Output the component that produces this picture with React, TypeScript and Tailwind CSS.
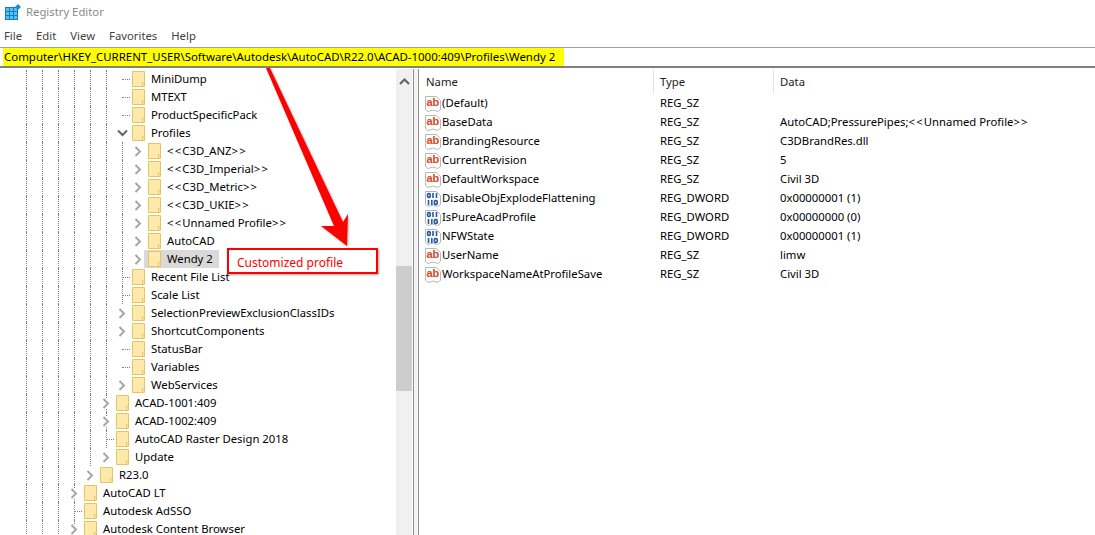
import React from "react";

const Folder = () => (
  <svg width="13" height="16" viewBox="0 0 13 16" className="shrink-0">
    <path d="M0.5 0.5H12.5V15.5H0.5Z" fill="#ffe9a8" stroke="#e6c567" />
    <path d="M10.5 11.5V15M11 11.5H12" stroke="#e6c567" fill="none" />
  </svg>
);

const ChevronRight = () => (
  <svg width="8" height="11" viewBox="0 0 8 11" className="relative bg-white">
    <path d="M1.5 1L6 5.5L1.5 10" fill="none" stroke="#a6a6a6" strokeWidth="2" />
  </svg>
);

const ChevronDown = () => (
  <svg width="11" height="8" viewBox="0 0 11 8" className="relative bg-white">
    <path d="M1 1.5L5.5 6L10 1.5" fill="none" stroke="#646464" strokeWidth="2" />
  </svg>
);

const Spaced = ({ text }: { text: string }) => (
  <>
    {text.split(/(<<|>>)/).map((part, i) =>
      part === "<<" || part === ">>" ? (
        <span key={i} className="tracking-[1.2px]">{part}</span>
      ) : (
        <span key={i}>{part}</span>
      )
    )}
  </>
);

type Chev = "right" | "down" | "none";
type Node = { depth: number; label: string; chev: Chev; line?: boolean; selected?: boolean };

const nodes: Node[] = [
  { depth: 8, label: "MiniDump", chev: "none" },
  { depth: 8, label: "MTEXT", chev: "none" },
  { depth: 8, label: "ProductSpecificPack", chev: "none" },
  { depth: 8, label: "Profiles", chev: "down" },
  { depth: 9, label: "<<C3D_ANZ>>", chev: "right" },
  { depth: 9, label: "<<C3D_Imperial>>", chev: "right" },
  { depth: 9, label: "<<C3D_Metric>>", chev: "right" },
  { depth: 9, label: "<<C3D_UKIE>>", chev: "right" },
  { depth: 9, label: "<<Unnamed Profile>>", chev: "right" },
  { depth: 9, label: "AutoCAD", chev: "right" },
  { depth: 9, label: "Wendy 2", chev: "right", selected: true },
  { depth: 8, label: "Recent File List", chev: "none", line: true },
  { depth: 8, label: "Scale List", chev: "none", line: true },
  { depth: 8, label: "SelectionPreviewExclusionClassIDs", chev: "right" },
  { depth: 8, label: "ShortcutComponents", chev: "right" },
  { depth: 8, label: "StatusBar", chev: "none" },
  { depth: 8, label: "Variables", chev: "none" },
  { depth: 8, label: "WebServices", chev: "right" },
  { depth: 7, label: "ACAD-1001:409", chev: "right", line: true },
  { depth: 7, label: "ACAD-1002:409", chev: "right", line: true },
  { depth: 7, label: "AutoCAD Raster Design 2018", chev: "none", line: true },
  { depth: 7, label: "Update", chev: "right" },
  { depth: 6, label: "R23.0", chev: "right" },
  { depth: 5, label: "AutoCAD LT", chev: "right", line: true },
  { depth: 5, label: "Autodesk AdSSO", chev: "none", line: true },
  { depth: 5, label: "Autodesk Content Browser", chev: "right", line: true },
];

const TreeRow = ({ n }: { n: Node }) => {
  const full = Array.from({ length: n.depth - 3 });
  return (
    <div className="flex h-[18px] shrink-0 items-center pl-[26px]">
      {full.map((_, i) => (
        <span key={i} className="h-full w-4 shrink-0 border-l border-dotted border-[#808080]" />
      ))}
      <span className="h-full w-2 shrink-0 border-l border-dotted border-[#808080]" />
      <span className="relative flex h-full w-4 shrink-0 items-center justify-center">
        {n.line && <span className="absolute top-0 left-2 h-full border-l border-dotted border-[#808080]" />}
        {n.chev === "right" && <ChevronRight />}
        {n.chev === "down" && <ChevronDown />}
        {n.chev === "none" && <span className="absolute top-[9px] left-2 w-2 border-t border-dotted border-[#808080]" />}
      </span>
      <div className={`flex h-full items-center ${n.selected ? "-ml-[2px] bg-[#d9d9d9] pr-[6px] pl-1" : "ml-[2px]"}`}>
        <Folder />
        <span className="ml-[6px] text-[11.3px] leading-none whitespace-nowrap text-black"><Spaced text={n.label} /></span>
      </div>
    </div>
  );
};

const Page = ({ stroke }: { stroke: string }) => (
  <path d="M0.5 0.5H11.5L15.5 4.5V13.5L12.5 15.5L8 14L3 15.5L0.5 13.5Z" fill="#fff" stroke={stroke} />
);

const AbIcon = () => (
  <svg width="16" height="16" viewBox="0 0 16 16" className="shrink-0">
    <Page stroke="#b8b8b8" />
    <text x="1.5" y="10" fontSize="11" fontWeight="700" fontFamily="'Liberation Sans', sans-serif" fill="#d8461f">ab</text>
  </svg>
);

const BinIcon = () => (
  <svg width="16" height="16" viewBox="0 0 16 16" className="shrink-0">
    <Page stroke="#b0b4bc" />
    <g fill="none" stroke="#2458a8" strokeWidth="1.6">
      <rect x="2.6" y="2.6" width="2.6" height="3.8" rx="1" />
      <path d="M8 2V7M11.5 2V7" />
      <path d="M3.5 9V14M6.8 9V14" />
      <rect x="9.4" y="9.6" width="2.8" height="3.8" rx="1" />
    </g>
  </svg>
);

const values: [string, string, string][] = [
  ["(Default)", "REG_SZ", ""],
  ["BaseData", "REG_SZ", "AutoCAD;PressurePipes;<<Unnamed Profile>>"],
  ["BrandingResource", "REG_SZ", "C3DBrandRes.dll"],
  ["CurrentRevision", "REG_SZ", "5"],
  ["DefaultWorkspace", "REG_SZ", "Civil 3D"],
  ["DisableObjExplodeFlattening", "REG_DWORD", "0x00000001 (1)"],
  ["IsPureAcadProfile", "REG_DWORD", "0x00000000 (0)"],
  ["NFWState", "REG_DWORD", "0x00000001 (1)"],
  ["UserName", "REG_SZ", "limw"],
  ["WorkspaceNameAtProfileSave", "REG_SZ", "Civil 3D"],
];

export default function App() {
  return (
    <div className="relative flex h-[535px] w-[1095px] flex-col overflow-hidden bg-white font-['Noto_Sans',sans-serif] text-[11.3px]">
      <div className="flex h-[25px] shrink-0 items-center pl-[5px]">
        <svg width="16" height="17" viewBox="0 0 16 17" className="shrink-0">
          <rect x="0" y="3" width="13" height="13" fill="#0f7fc4" />
          <g fill="#5cc0ee">
            <rect x="1" y="4" width="3" height="3" /><rect x="5" y="4" width="3" height="3" /><rect x="9" y="4" width="3" height="3" />
            <rect x="1" y="8" width="3" height="3" /><rect x="5" y="8" width="3" height="3" /><rect x="9" y="8" width="3" height="3" />
            <rect x="1" y="12" width="3" height="3" /><rect x="5" y="12" width="3" height="3" /><rect x="9" y="12" width="3" height="3" />
          </g>
          <path d="M13 0L16 3L13 6L10 3Z" fill="#1a8fd0" />
        </svg>
        <span className="ml-[5px] text-[#8a8a8a]">Registry Editor</span>
      </div>
      <div className="flex h-[22px] shrink-0 items-center gap-[14px] pt-px pl-1 text-[#3f3f3f]">
        <span>File</span><span>Edit</span><span>View</span><span>Favorites</span><span>Help</span>
      </div>
      <div className="h-[21px] shrink-0 border-t border-b-2 border-t-[#a0a0a0] border-b-[#808080] pl-[3px]">
        <div className="h-full w-[561px] bg-[#ffff00] pl-px text-[11.45px] leading-[18px] whitespace-nowrap text-black">
          Computer\HKEY_CURRENT_USER\Software\Autodesk\AutoCAD\R22.0\ACAD-1000:409\Profiles\Wendy 2
        </div>
      </div>
      <div className="flex min-h-0 flex-1 pt-[1px]">
        <div className="flex h-full w-[396px] shrink-0 flex-col overflow-hidden pt-px">
          {nodes.map((n) => <TreeRow key={n.label} n={n} />)}
        </div>
        <div className="flex w-[16px] shrink-0 flex-col bg-[#f0f0f0]">
          <div className="flex h-[197px] shrink-0 items-start justify-center pt-[9px]">
            <svg width="11" height="7" viewBox="0 0 11 7"><path d="M1 6L5.5 1.5L10 6" fill="none" stroke="#606060" strokeWidth="2" /></svg>
          </div>
          <div className="h-[125px] shrink-0 bg-[#cdcdcd]" />
        </div>
        <div className="ml-px h-full w-[6px] shrink-0 border-x border-[#8e8e8e] bg-[#f4f4f4]" />
        <div className="flex min-w-0 flex-1 flex-col pt-px">
          <div className="flex h-[24px] shrink-0 text-[#222]">
            <div className="flex w-[235px] items-center border-r border-[#e5e5e5] pl-[7px]">Name</div>
            <div className="flex w-[120px] items-center border-r border-[#e5e5e5] pl-[6px]">Type</div>
            <div className="flex items-center pl-[6px]">Data</div>
          </div>
          {values.map(([name, type, data]) => (
            <div key={name} className="flex h-[19px] shrink-0 items-center whitespace-nowrap text-black">
              <div className="flex w-[235px] items-center pl-[6px]">
                {type === "REG_SZ" ? <AbIcon /> : <BinIcon />}
                <span className="ml-px">{name}</span>
              </div>
              <div className="w-[120px] pl-[6px]">{type}</div>
              <div className="pl-[6px]"><Spaced text={data} /></div>
            </div>
          ))}
        </div>
      </div>

      <svg width="100" height="190" viewBox="0 0 100 190" className="absolute top-[66px] left-[260px]" style={{ filter: "drop-shadow(1px 1px 1px rgba(0,0,0,0.3))" }}>
        <path d="M6 2L10 2L83 156L88 148L87 180L61 160L74 160Z" fill="#ff0000" />
      </svg>
      <div className="absolute top-[248px] left-[227px] flex h-[26px] w-[151px] items-center border-2 border-[#ff0000] bg-white pt-[3px] pl-2 text-[12px] text-[#ff0000] shadow-[1px_1px_2px_rgba(0,0,0,0.35)]">
        Customized profile
      </div>
    </div>
  );
}
